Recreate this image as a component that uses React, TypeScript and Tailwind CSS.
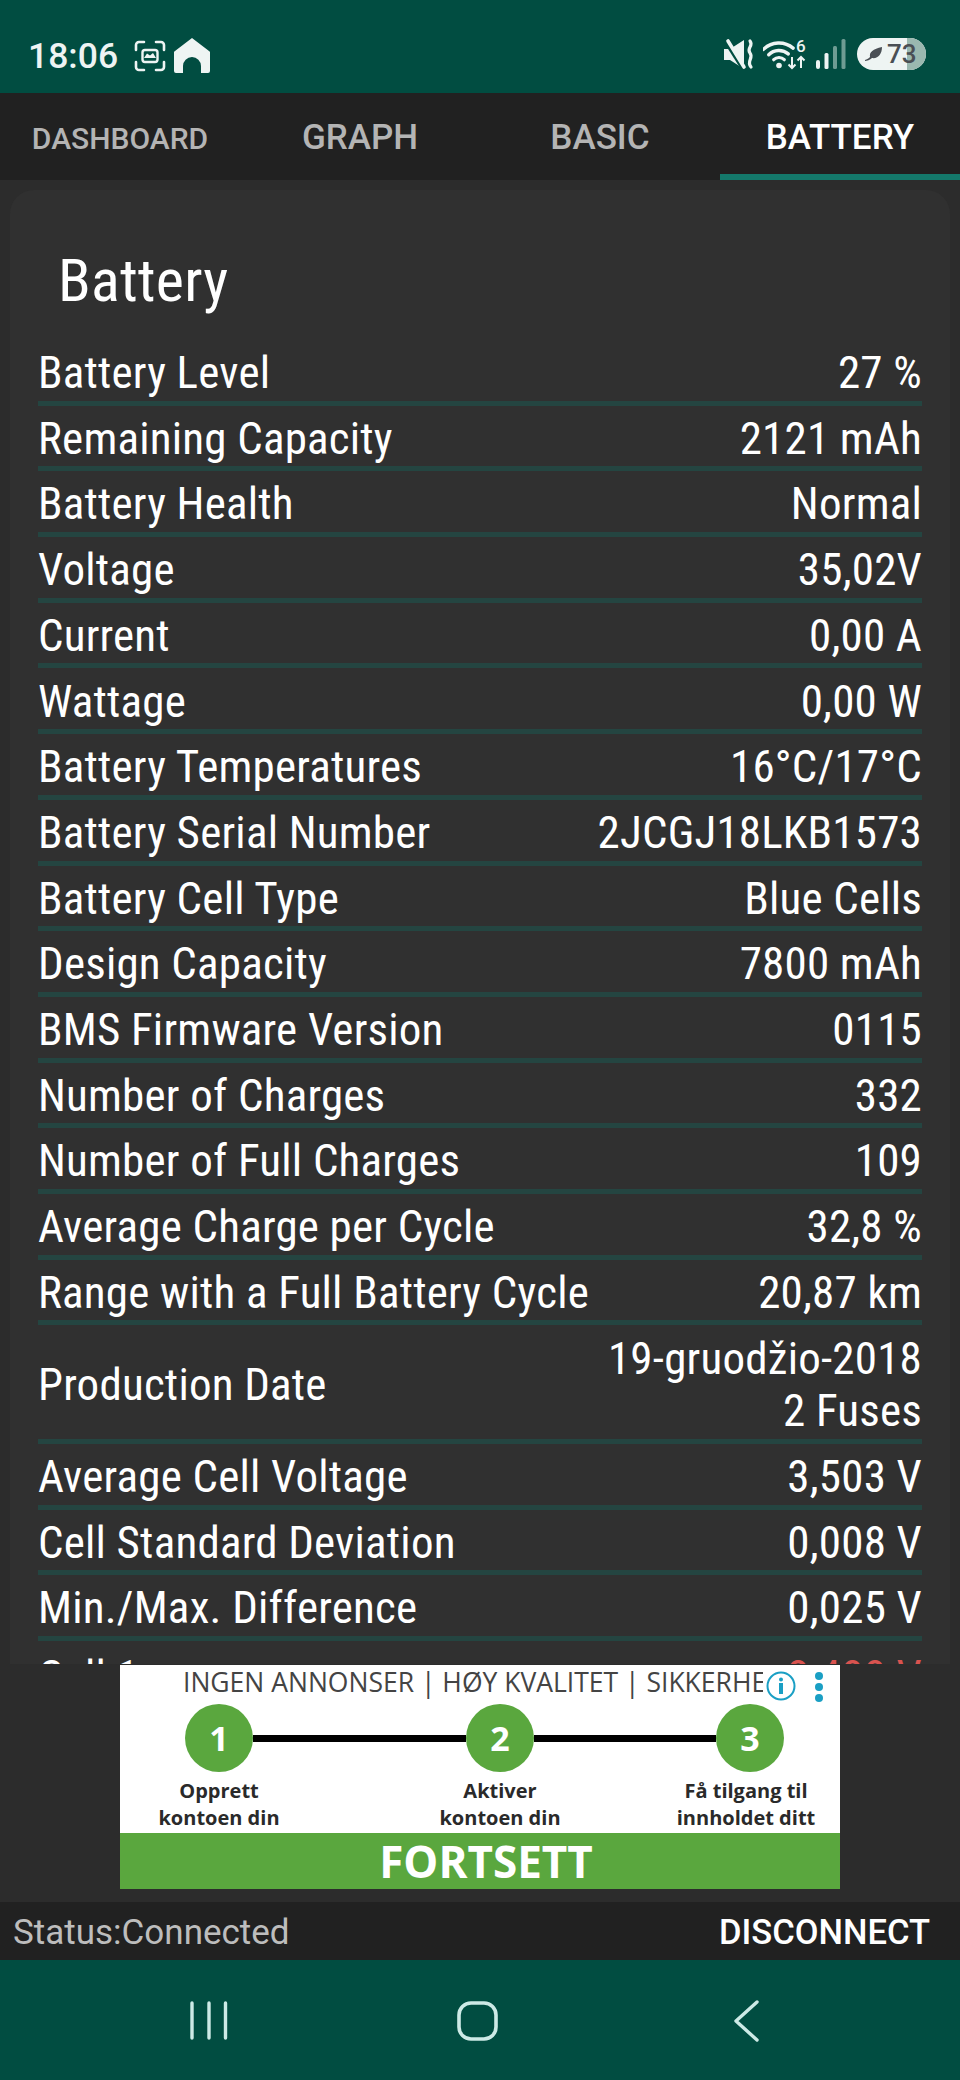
const rows: [string, string[]][] = [
  ["Battery Level", ["27 %"]],
  ["Remaining Capacity", ["2121 mAh"]],
  ["Battery Health", ["Normal"]],
  ["Voltage", ["35,02V"]],
  ["Current", ["0,00 A"]],
  ["Wattage", ["0,00 W"]],
  ["Battery Temperatures", ["16°C/17°C"]],
  ["Battery Serial Number", ["2JCGJ18LKB1573"]],
  ["Battery Cell Type", ["Blue Cells"]],
  ["Design Capacity", ["7800 mAh"]],
  ["BMS Firmware Version", ["0115"]],
  ["Number of Charges", ["332"]],
  ["Number of Full Charges", ["109"]],
  ["Average Charge per Cycle", ["32,8 %"]],
  ["Range with a Full Battery Cycle", ["20,87 km"]],
  ["Production Date", ["19-gruodžio-2018", "2 Fuses"]],
  ["Average Cell Voltage", ["3,503 V"]],
  ["Cell Standard Deviation", ["0,008 V"]],
  ["Min./Max. Difference", ["0,025 V"]],
];

function Row({ label, value }: { label: string; value: string[] }) {
  const tall = value.length > 1;
  return (
    <div className={`flex items-center justify-between border-b-[5px] border-[#244541] pt-[6px] ${tall ? "h-[118.7px]" : "h-[65.7px]"}`}>
      <span>{label}</span>
      <div className="text-right">
        {value.map((v) => (
          <div key={v}>{v}</div>
        ))}
      </div>
    </div>
  );
}

function StatusIcons() {
  return (
    <div className="flex items-center">
      <svg width="32" height="32" viewBox="0 0 32 32" fill="none" className="ml-[16px]">
        <path d="M10 2 H5 a3 3 0 0 0 -3 3 V10 M22 2 H27 a3 3 0 0 1 3 3 V10 M10 30 H5 a3 3 0 0 1 -3 -3 V22 M22 30 H27 a3 3 0 0 0 3 -3 V22" stroke="#eef4f3" strokeWidth="2.6" strokeLinecap="round" />
        <rect x="8.5" y="10" width="15" height="12" rx="2.5" stroke="#eef4f3" strokeWidth="2.4" />
        <path d="M10 18 L13 13.5 L16 15.5 L19 13 L22 18 Z" fill="#eef4f3" />
      </svg>
      <svg width="36" height="35" viewBox="0 0 36 35" className="ml-[8px]">
        <path d="M18 0 L35 13 A2 2 0 0 1 36 15 V33 A2 2 0 0 1 34 35 H27 V28 A9 9 0 0 0 9 28 V35 H2 A2 2 0 0 1 0 33 V15 A2 2 0 0 1 1 13 Z" fill="#eef4f3" />
      </svg>
    </div>
  );
}

function RightIcons() {
  return (
    <div className="flex items-center">
      <svg width="32" height="32" viewBox="0 0 32 32" fill="none">
        <path d="M1 11 H7 L21 2 V31 L7 22 H1 Z" fill="#eef4f3" />
        <path d="M1 0 L22 33" stroke="#014d41" strokeWidth="5" />
        <path d="M5 3 L21 29" stroke="#eef4f3" strokeWidth="3.6" strokeLinecap="round" />
        <path d="M27 3 C31 8 23 10 27 15 C31 20 23 23 28 29" stroke="#eef4f3" strokeWidth="3.2" strokeLinecap="round" />
      </svg>
      <svg width="44" height="32" viewBox="0 0 44 32" fill="none" className="ml-[8px]">
        <path d="M0.400 11.400 A22 22 0 0 1 30.100 10.100" stroke="#eef4f3" strokeWidth="3.4" strokeLinecap="round" />
        <path d="M5.700 16.700 A14.500 14.500 0 0 1 25.300 15.900" stroke="#eef4f3" strokeWidth="3.4" strokeLinecap="round" />
        <path d="M10.700 21.700 A7.500 7.500 0 0 1 21.300 21.700" stroke="#eef4f3" strokeWidth="3.2" strokeLinecap="round" />
        <circle cx="16" cy="27.500" r="2.800" fill="#eef4f3" />
        <path d="M29 19 V30 M25.500 26.500 L29 30 L32.500 26.500 M38 30 V19 M34.500 22.500 L38 19 L41.500 22.500" stroke="#eef4f3" strokeWidth="2" />
        <text x="33" y="14" fontSize="17" fontWeight="500" fill="#eef4f3" fontFamily="Roboto, sans-serif">6</text>
      </svg>
      <svg width="30" height="30" viewBox="0 0 30 30" className="ml-[9px]">
        <rect x="0" y="21" width="4" height="9" rx="2" fill="#eef4f3" />
        <rect x="8.500" y="14" width="4" height="16" rx="1.500" fill="#eef4f3" />
        <rect x="17" y="7" width="4" height="23" rx="1.500" fill="#6e9c93" />
        <rect x="25.500" y="0" width="4" height="30" rx="1.500" fill="#6e9c93" />
      </svg>
      <div className="relative ml-[11px] flex h-[32px] w-[69px] items-center overflow-hidden rounded-full bg-[#eef4f3]">
        <div className="absolute inset-y-0 right-0 w-[19px] bg-[#9ab8b0]" />
        <svg width="18" height="14" viewBox="0 0 18 14" className="relative ml-[8px]">
          <path d="M0 13 C3 12 4 11 5 10 C4 5 8 2 17 0 C17 7 13 12 7 11 C5 13 2 14 0 14 Z" fill="#4a4f55" />
        </svg>
        <span className="relative ml-[4px] text-[26px] leading-none font-medium text-[#4a4f55]">73</span>
      </div>
    </div>
  );
}

function Step({ n }: { n: string }) {
  return (
    <div className="flex h-[68px] w-[68px] shrink-0 items-center justify-center rounded-full bg-[#5aa73e] text-[34px] font-bold text-white">
      {n}
    </div>
  );
}

function Ad() {
  return (
    <div className="relative flex h-[224px] w-[720px] flex-col overflow-hidden bg-white [font-family:'Open_Sans',sans-serif]">
      <div className="ml-[63px] h-[39px] w-[580px] overflow-hidden text-[26.500px] leading-[34px] whitespace-nowrap text-[#444444]">
        INGEN ANNONSER | HØY KVALITET | SIKKERHET
      </div>
      <div className="ml-[65px] flex h-[68px] items-center">
        <Step n="1" />
        <div className="h-[7px] w-[213px] bg-black" />
        <Step n="2" />
        <div className="h-[7px] w-[182px] bg-black" />
        <Step n="3" />
      </div>
      <div className="mt-[5px] flex h-[56px] text-[20px] leading-[27px] font-bold text-[#2a2a2a]">
        <div className="ml-[9px] w-[180px] text-center">Opprett<br />kontoen din</div>
        <div className="ml-[101px] w-[180px] text-center">Aktiver<br />kontoen din</div>
        <div className="ml-[66px] w-[180px] text-center">Få tilgang til<br />innholdet ditt</div>
      </div>
      <div className="flex h-[56px] items-center justify-center bg-[#5aa73e] pl-[12px] text-[44px] font-bold text-white">
        FORTSETT
      </div>
      <svg width="30" height="30" viewBox="0 0 30 30" fill="none" className="absolute top-[6px] left-[646px]">
        <circle cx="15" cy="15" r="13.500" stroke="#1a9fc4" strokeWidth="2" />
        <circle cx="15" cy="8.500" r="2" fill="#1a9fc4" />
        <rect x="13" y="12" width="4" height="11" fill="#1a9fc4" />
      </svg>
      <div className="absolute top-[7px] left-[695px] flex flex-col gap-[3px]">
        <div className="h-[8px] w-[8px] rounded-full bg-[#1a9fc4]" />
        <div className="h-[8px] w-[8px] rounded-full bg-[#1a9fc4]" />
        <div className="h-[8px] w-[8px] rounded-full bg-[#1a9fc4]" />
      </div>
    </div>
  );
}

export default function App() {
  return (
    <div className="flex h-[2080px] w-[960px] flex-col overflow-hidden bg-[#2c2c2c] [font-family:Roboto,sans-serif]">
      <div className="flex h-[93px] shrink-0 items-start justify-between bg-[#014d41] pt-[38px] pr-[34px] pl-[28px]">
        <div className="flex items-center">
          <span className="text-[35.500px] leading-[34px] font-medium text-[#eef4f3]">18:06</span>
          <StatusIcons />
        </div>
        <RightIcons />
      </div>

      <div className="grid h-[87px] shrink-0 grid-cols-4 bg-[#212121] text-[35px] font-medium text-[#b4b4b4]">
        <div className="flex items-center justify-center pt-[3px] text-[30px]">DASHBOARD</div>
        <div className="flex items-center justify-center pt-[3px]">GRAPH</div>
        <div className="flex items-center justify-center pt-[3px]">BASIC</div>
        <div className="flex items-center justify-center border-b-[6px] border-[#14796b] pt-[9px] text-white">BATTERY</div>
      </div>

      <div className="h-[1484px] shrink-0 overflow-hidden px-[10px] pt-[10px]">
        <div className="rounded-t-[24px] bg-[#303030] px-[28px] [font-stretch:75%] text-[45px] leading-[52.500px] tracking-[0.2px] text-white">
          <div className="flex h-[150px] items-center pt-[32px] pl-[20px] text-[60px]">Battery</div>
          {rows.map(([l, v]) => (
            <Row key={l} label={l} value={v} />
          ))}
          <div className="flex h-[65.7px] items-center justify-between pt-[6px]">
            <span>Cell 1</span>
            <span className="text-[#d9534f]">3,488 V</span>
          </div>
        </div>
      </div>

      <div className="flex h-[238px] shrink-0 justify-center pt-[1px]">
        <Ad />
      </div>

      <div className="flex h-[58px] shrink-0 items-center justify-between bg-[#212121] pt-[4px] pr-[30px] pl-[13px] text-[35px]">
        <span className="text-[#bdbdbd]">Status:Connected</span>
        <span className="text-[34.500px] font-medium text-white">DISCONNECT</span>
      </div>

      <div className="flex flex-1 items-center justify-center bg-[#014d41]">
        <svg width="960" height="120" viewBox="0 0 960 120" fill="none">
          <path d="M192 43 V78 M209 43 V78 M225.500 43 V78" stroke="#cdeae6" strokeWidth="3.4" strokeLinecap="round" />
          <rect x="459" y="43" width="37" height="36" rx="12" stroke="#cdeae6" strokeWidth="3.6" />
          <path d="M757 42 L736 61 L757 80" stroke="#cdeae6" strokeWidth="3.4" strokeLinecap="round" strokeLinejoin="round" />
        </svg>
      </div>
    </div>
  );
}
